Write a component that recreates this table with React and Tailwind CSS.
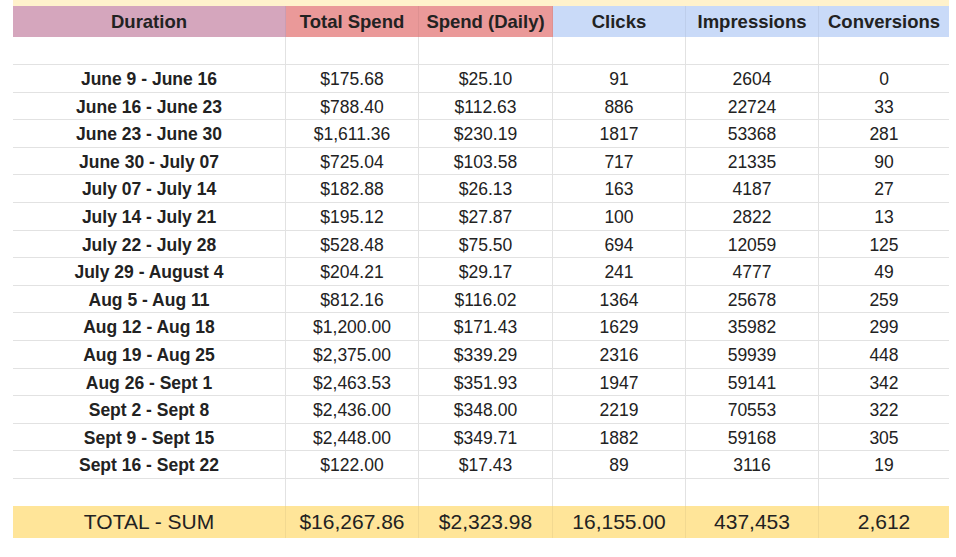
import React from "react";

const rows = [
  ["June 9 - June 16", "$175.68", "$25.10", "91", "2604", "0"],
  ["June 16 - June 23", "$788.40", "$112.63", "886", "22724", "33"],
  ["June 23 - June 30", "$1,611.36", "$230.19", "1817", "53368", "281"],
  ["June 30 - July 07", "$725.04", "$103.58", "717", "21335", "90"],
  ["July 07 - July 14", "$182.88", "$26.13", "163", "4187", "27"],
  ["July 14 - July 21", "$195.12", "$27.87", "100", "2822", "13"],
  ["July 22 - July 28", "$528.48", "$75.50", "694", "12059", "125"],
  ["July 29 - August 4", "$204.21", "$29.17", "241", "4777", "49"],
  ["Aug 5 - Aug 11", "$812.16", "$116.02", "1364", "25678", "259"],
  ["Aug 12 - Aug 18", "$1,200.00", "$171.43", "1629", "35982", "299"],
  ["Aug 19 - Aug 25", "$2,375.00", "$339.29", "2316", "59939", "448"],
  ["Aug 26 - Sept 1", "$2,463.53", "$351.93", "1947", "59141", "342"],
  ["Sept 2 - Sept 8", "$2,436.00", "$348.00", "2219", "70553", "322"],
  ["Sept 9 - Sept 15", "$2,448.00", "$349.71", "1882", "59168", "305"],
  ["Sept 16 - Sept 22", "$122.00", "$17.43", "89", "3116", "19"],
];

const headers = [
  ["Duration", "bg-[#d5a6bd]"],
  ["Total Spend", "bg-[#ea9999]"],
  ["Spend (Daily)", "bg-[#ea9999]"],
  ["Clicks", "bg-[#c9daf8]"],
  ["Impressions", "bg-[#c9daf8]"],
  ["Conversions", "bg-[#c9daf8]"],
];

const totals = ["TOTAL - SUM", "$16,267.86", "$2,323.98", "16,155.00", "437,453", "2,612"];

const grid = "grid grid-cols-[273px_133px_134px_133px_133px_130px]";

export default function App() {
  return (
    <div
      className="w-[956px] h-[557px] bg-white text-[#222] overflow-hidden"
      style={{ fontFamily: '"Liberation Sans", Arial, sans-serif' }}
    >
      <div className="ml-[13px] w-[936px]">
        <div className="h-[6px] bg-[#fff2cc]" />
        <div className={grid}>
          {headers.map(([h, bg], i) => (
            <div
              key={h}
              className={`${bg} h-[31px] flex items-center justify-center text-[18.5px] font-bold ${
                i < 5 ? "border-r border-black/5" : ""
              }`}
            >
              {h}
            </div>
          ))}
        </div>
        <div className={grid}>
          {[0, 1, 2, 3, 4, 5].map((i) => (
            <div
              key={i}
              className={`h-[28px] border-b border-[#e2e2e2] ${i < 5 ? "border-r" : ""}`}
            />
          ))}
        </div>
        {rows.map((r) => (
          <div key={r[0]} className={grid}>
            {r.map((c, i) => (
              <div
                key={i}
                className={`h-[27.6px] pt-[3px] border-b border-[#e2e2e2] flex items-center justify-center text-[17.5px] leading-none ${
                  i === 0 ? "font-bold text-[17.3px]" : ""
                } ${i < 5 ? "border-r" : ""}`}
              >
                {c}
              </div>
            ))}
          </div>
        ))}
        <div className={grid}>
          {[0, 1, 2, 3, 4, 5].map((i) => (
            <div key={i} className={`h-[27px] border-[#e2e2e2] ${i < 5 ? "border-r" : ""}`} />
          ))}
        </div>
        <div className={`${grid} bg-[#ffe599]`}>
          {totals.map((c, i) => (
            <div
              key={i}
              className={`h-[32px] flex items-center justify-center text-[21px] ${
                i < 5 ? "border-r border-black/5" : ""
              }`}
            >
              {c}
            </div>
          ))}
        </div>
      </div>
    </div>
  );
}
